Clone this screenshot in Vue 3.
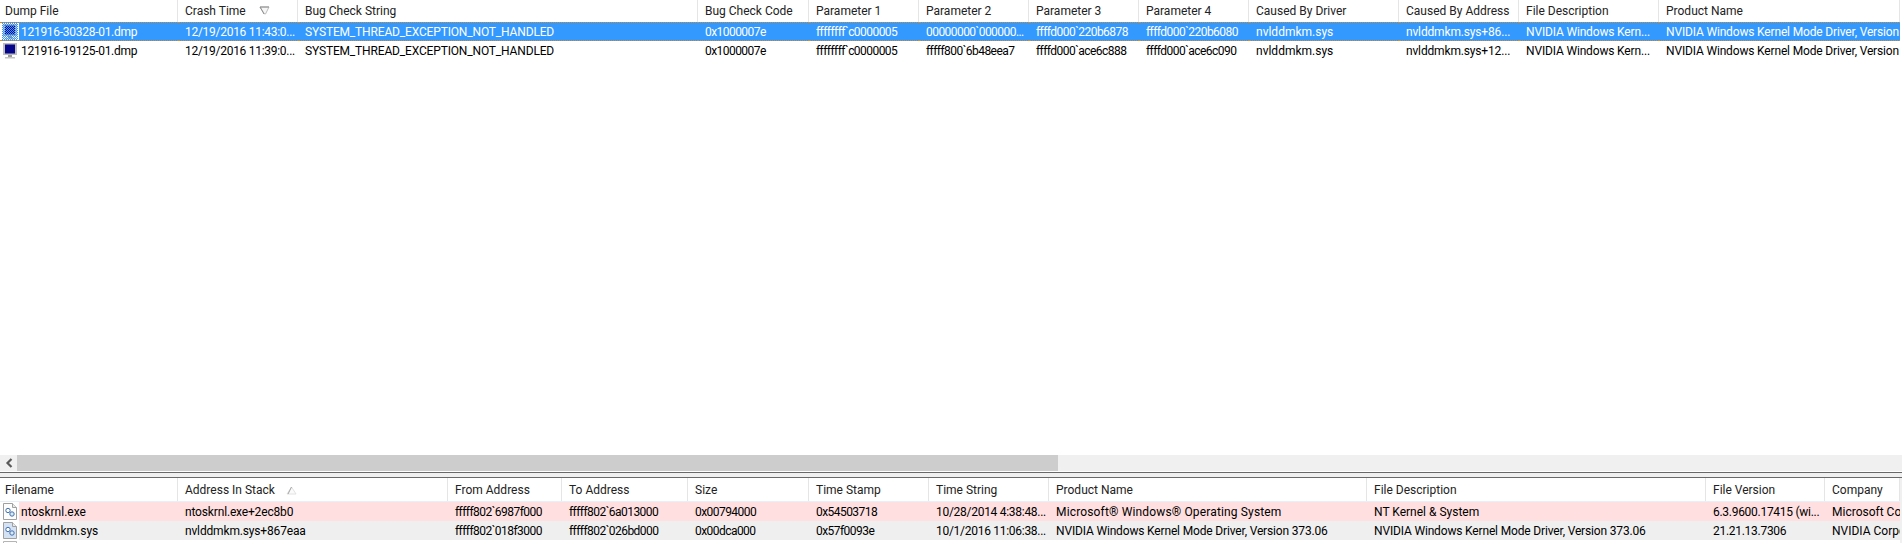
<script setup>
const topCols = [178, 120, 400, 111, 110, 110, 110, 110, 150, 120, 140, 241]
const botCols = [178, 270, 114, 126, 121, 120, 120, 318, 339, 119, 75]
const topHead = ['Dump File', 'Crash Time', 'Bug Check String', 'Bug Check Code', 'Parameter 1', 'Parameter 2', 'Parameter 3', 'Parameter 4', 'Caused By Driver', 'Caused By Address', 'File Description', 'Product Name']
const topRows = [
  { cls: 'sel', cells: ['121916-30328-01.dmp', '12/19/2016 11:43:0...', 'SYSTEM_THREAD_EXCEPTION_NOT_HANDLED', '0x1000007e', 'ffffffff`c0000005', '00000000`000000...', 'ffffd000`220b6878', 'ffffd000`220b6080', 'nvlddmkm.sys', 'nvlddmkm.sys+86...', 'NVIDIA Windows Kern...', 'NVIDIA Windows Kernel Mode Driver, Version 373.06'] },
  { cls: '', cells: ['121916-19125-01.dmp', '12/19/2016 11:39:0...', 'SYSTEM_THREAD_EXCEPTION_NOT_HANDLED', '0x1000007e', 'ffffffff`c0000005', 'fffff800`6b48eea7', 'ffffd000`ace6c888', 'ffffd000`ace6c090', 'nvlddmkm.sys', 'nvlddmkm.sys+12...', 'NVIDIA Windows Kern...', 'NVIDIA Windows Kernel Mode Driver, Version 373.06'] }
]
const botHead = ['Filename', 'Address In Stack', 'From Address', 'To Address', 'Size', 'Time Stamp', 'Time String', 'Product Name', 'File Description', 'File Version', 'Company']
const botRows = [
  { cls: 'pink', cells: ['ntoskrnl.exe', 'ntoskrnl.exe+2ec8b0', 'fffff802`6987f000', 'fffff802`6a013000', '0x00794000', '0x54503718', '10/28/2014 4:38:48...', 'Microsoft® Windows® Operating System', 'NT Kernel & System', '6.3.9600.17415 (wi...', 'Microsoft Corporation'] },
  { cls: 'gray', cells: ['nvlddmkm.sys', 'nvlddmkm.sys+867eaa', 'fffff802`018f3000', 'fffff802`026bd000', '0x00dca000', '0x57f0093e', '10/1/2016 11:06:38...', 'NVIDIA Windows Kernel Mode Driver, Version 373.06', 'NVIDIA Windows Kernel Mode Driver, Version 373.06', '21.21.13.7306', 'NVIDIA Corporation'] }
]
const textClass = (c) => {
  if (/^(0x|f{5}|f{4}d|0{8})/.test(c)) return 'tight'
  if (/^\d/.test(c)) return 'mid'
  if (c.startsWith('SYSTEM') || c.includes('+') || c.startsWith('NVIDIA W')) return 'slight'
  if (c.includes('®')) return 'wide'
  return ''
}
</script>

<template>
  <div class="app">
    <section class="pane top">
      <div class="head">
        <div v-for="(h, i) in topHead" :key="h" class="hcell" :style="{ width: topCols[i] + 'px' }">
          <span>{{ h }}</span>
          <svg v-if="i === 1" class="sort" width="11" height="9" viewBox="0 0 11 9"><path d="M1 1H10L6.5 8H5.5Z" fill="#f6f6f6" stroke="#bcbcbc"/><path d="M1 1H10M1 1L5 8" fill="none" stroke="#8f8f8f"/></svg>
        </div>
      </div>
      <div v-for="r in topRows" :key="r.cells[0]" class="row" :class="r.cls">
        <div v-for="(c, i) in r.cells" :key="i" class="cell" :class="{ first: i === 0 }" :style="{ width: topCols[i] + 'px' }">
          <span v-if="i === 0" class="icobox">
            <svg width="16" height="17" viewBox="0 0 16 17">
              <defs><pattern id="dots" width="2" height="2" patternUnits="userSpaceOnUse"><rect width="1" height="1" fill="#3399ff"/><rect x="1" y="1" width="1" height="1" fill="#3399ff"/></pattern></defs>
              <rect x="1" y="1" width="14" height="12" fill="#bdbdbd"/>
              <rect x="3" y="2.5" width="10" height="9" fill="#05058c"/>
              <rect x="6" y="13" width="4" height="2" fill="#9a9a9a"/>
              <rect x="3" y="15" width="10" height="1.5" fill="#c4c4c4"/>
              <rect v-if="r.cls === 'sel'" x="0" y="0" width="16" height="17" fill="url(#dots)"/>
            </svg>
          </span>
          <span class="txt" :class="textClass(c)">{{ c }}</span>
        </div>
      </div>
      <div class="fill"></div>
      <div class="hscroll">
        <span class="arrow"><svg width="8" height="10" viewBox="0 0 8 10"><path d="M6.5 1L2.5 5L6.5 9" fill="none" stroke="#5a5a5a" stroke-width="2.2"/></svg></span>
        <div class="thumb"></div>
      </div>
    </section>
    <div class="split"></div>
    <section class="pane bottom">
      <div class="head">
        <div v-for="(h, i) in botHead" :key="h" class="hcell" :style="{ width: botCols[i] + 'px' }">
          <span>{{ h }}</span>
          <svg v-if="i === 1" class="sort2" width="11" height="9" viewBox="0 0 11 9"><path d="M5.5 1L10 8H1Z" fill="#fbfbfb" stroke="#e2e2e2"/><path d="M5.5 1L2 8" fill="none" stroke="#a4a4a4"/></svg>
        </div>
      </div>
      <div v-for="r in botRows" :key="r.cells[0]" class="row" :class="r.cls">
        <div v-for="(c, i) in r.cells" :key="i" class="cell" :class="{ first: i === 0 }" :style="{ width: botCols[i] + 'px' }">
          <span v-if="i === 0" class="icobox">
            <svg width="14" height="17" viewBox="0 0 14 17">
              <path d="M0.5 0.5H9.5L13.5 4.5V16.5H0.5Z" :fill="r.cls === 'gray' ? '#d5e2f3' : '#fdfdfd'" stroke="#a0a0a0"/>
              <path d="M9.5 0.5V4.5H13.5" fill="#eaeaea" stroke="#a0a0a0"/>
              <circle cx="5" cy="7.5" r="2.2" fill="#fff" stroke="#3f70b0"/>
              <circle cx="9" cy="11" r="2.2" fill="#dde8f5" stroke="#3f70b0"/>
            </svg>
          </span>
          <span class="txt" :class="textClass(c)">{{ c }}</span>
        </div>
      </div>
      <div class="row peek">
        <span class="icobox"><svg width="14" height="17" viewBox="0 0 14 17"><path d="M0.5 0.5H13.5V16.5H0.5Z" fill="#fdfdfd" stroke="#b4b4b4"/></svg></span>
      </div>
    </section>
  </div>
</template>

<style>
html, body { margin: 0; padding: 0; background: #fff; overflow: hidden; }
</style>

<style scoped>
.app {
  width: 1902px;
  height: 543px;
  display: flex;
  flex-direction: column;
  overflow: hidden;
  background: #fff;
  font-family: Roboto, "Open Sans", sans-serif;
  font-size: 12px;
  color: #000;
}
.pane { display: flex; flex-direction: column; width: 1902px; overflow: hidden; }
.top { height: 472px; }
.bottom { flex: 1; border-right: 2px solid #f0f0f0; box-sizing: border-box; }
.head { display: flex; height: 22px; flex: none; }
.bottom .head { height: 24px; box-sizing: border-box; border-bottom: 1px solid #e6f0fa; }
.hcell {
  flex: none;
  box-sizing: border-box;
  display: flex;
  align-items: center;
  padding-left: 7px;
  border-right: 1px solid #e5e5e5;
  color: #222;
  position: relative;
  white-space: nowrap;
}
.hcell:first-child { padding-left: 5px; }
.sort { position: absolute; left: 81px; top: 6px; }
.sort2 { position: absolute; left: 108px; top: 8px; }
.row { display: flex; height: 19px; flex: none; }
.cell {
  flex: none;
  box-sizing: border-box;
  padding-left: 7px;
  white-space: nowrap;
  overflow: hidden;
  display: flex;
  align-items: center;
  height: 100%;
}
.cell.first { padding-left: 0; }
.first .txt { padding-left: 2px; }
.tight { letter-spacing: -0.55px; }
.mid { letter-spacing: -0.28px; }
.slight { letter-spacing: -0.16px; }
.wide { letter-spacing: 0.15px; }
.icobox {
  width: 19px;
  height: 100%;
  flex: none;
  display: flex;
  align-items: center;
  justify-content: center;
  background: #fff;
}
.row.sel .cell {
  background: #3399ff;
  color: #fff;
  border-top: 1px dotted #d98a20;
  border-bottom: 1px dotted #d98a20;
}
.row.pink .cell { background: #ffdfdf; }
.row.gray .cell { background: #efefef; }
.fill { flex: 1; }
.hscroll {
  flex: none;
  height: 16px;
  margin-bottom: 1px;
  background: #f0f0f0;
  display: flex;
  align-items: stretch;
}
.arrow { width: 17px; flex: none; display: flex; align-items: center; justify-content: center; }
.thumb { width: 1041px; background: #cdcdcd; }
.split { height: 6px; flex: none; background: #f0f0f0; border-top: 1px solid #696969; border-bottom: 1px solid #696969; box-sizing: border-box; }
</style>
